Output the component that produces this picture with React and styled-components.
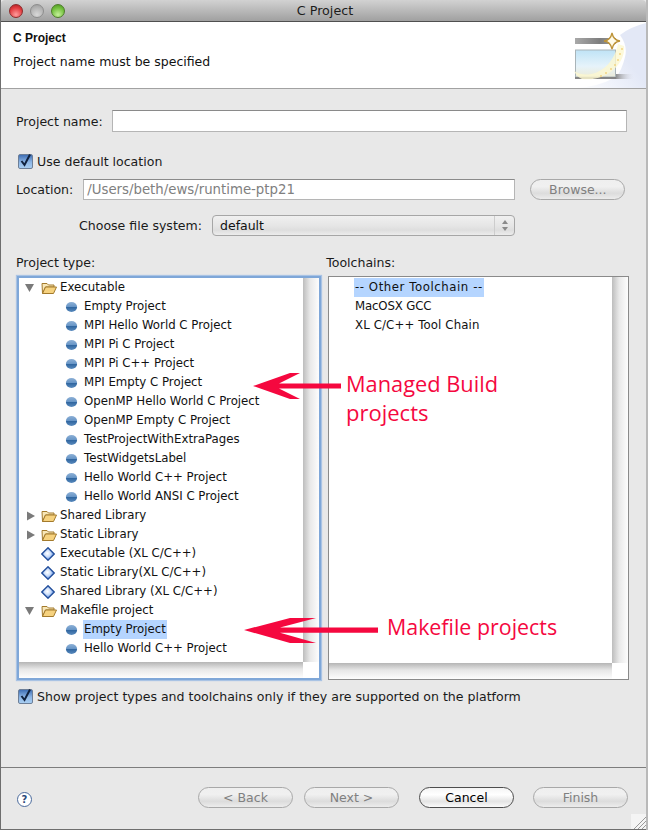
import React from "react";
import styled, { createGlobalStyle } from "styled-components";

const GlobalStyles = createGlobalStyle`
  html, body { margin: 0; padding: 0; background: #b9b9b9; }
  * { box-sizing: border-box; }
  body { font-family: "DejaVu Sans", "Liberation Sans", sans-serif; font-size: 12px; color: #111; }
`;

const PROJECT_TYPES = [
  { label: "Executable", kind: "open" },
  { label: "Empty Project", kind: "leaf" },
  { label: "MPI Hello World C Project", kind: "leaf" },
  { label: "MPI Pi C Project", kind: "leaf" },
  { label: "MPI Pi C++ Project", kind: "leaf" },
  { label: "MPI Empty C Project", kind: "leaf" },
  { label: "OpenMP Hello World C Project", kind: "leaf" },
  { label: "OpenMP Empty C Project", kind: "leaf" },
  { label: "TestProjectWithExtraPages", kind: "leaf" },
  { label: "TestWidgetsLabel", kind: "leaf" },
  { label: "Hello World C++ Project", kind: "leaf" },
  { label: "Hello World ANSI C Project", kind: "leaf" },
  { label: "Shared Library", kind: "closed" },
  { label: "Static Library", kind: "closed" },
  { label: "Executable (XL C/C++)", kind: "diamond" },
  { label: "Static Library(XL C/C++)", kind: "diamond" },
  { label: "Shared Library (XL C/C++)", kind: "diamond" },
  { label: "Makefile project", kind: "open" },
  { label: "Empty Project", kind: "leaf", selected: true },
  { label: "Hello World C++ Project", kind: "leaf" },
];

const TOOLCHAINS = [
  { label: "-- Other Toolchain --", selected: true, tracking: 0.55 },
  { label: "MacOSX GCC", tracking: -0.15 },
  { label: "XL C/C++ Tool Chain", tracking: 0.12 },
];

const SPARKLES = [
  [46, 32], [44, 38], [41, 43], [37, 47], [32, 51], [27, 54], [48, 27],
];

const Window = styled.div`
  position: relative;
  width: 646px;
  height: 830px;
  display: flex;
  flex-direction: column;
  background: #e8e8e8;
  border-left: 1px solid #6e6e6e;
  border-bottom: 1px solid #6e6e6e;
  overflow: hidden;
`;

const TitleBar = styled.div`
  height: 22px;
  flex: none;
  position: relative;
  display: flex;
  align-items: center;
  justify-content: center;
  padding-left: 3px;
  font-size: 12.7px;
  color: #1c1c1c;
  background: linear-gradient(#d2d2d2, #a0a0a0);
  border-bottom: 1px solid #4f4f4f;
  border-radius: 4px 4px 0 0;
`;

const Lights = styled.div`
  position: absolute;
  left: 8px;
  top: 4px;
  display: flex;
  gap: 7px;
`;

const Light = styled.span`
  width: 14px;
  height: 14px;
  border-radius: 50%;
  border: 1px solid ${(p) => p.$edge};
  background: radial-gradient(circle at 50% 80%, ${(p) => p.$glow}, ${(p) => p.$color} 60%, ${(p) => p.$top});
`;

const Header = styled.div`
  height: 67px;
  flex: none;
  display: flex;
  justify-content: space-between;
  background: #fff;
  border-bottom: 1px solid #a2a2a2;
`;

const HeaderText = styled.div`
  padding: 9px 0 0 12px;
`;

const HeaderTitle = styled.div`
  font-family: "Liberation Sans", sans-serif;
  font-weight: bold;
  font-size: 12px;
  line-height: 15px;
`;

const HeaderMessage = styled.div`
  margin: 8px 0 0 0;
  font-size: 12.5px;
  line-height: 15px;
`;

const Body = styled.div`
  flex: 1;
  display: flex;
  flex-direction: column;
  padding: 21px 0 0 15px;
`;

const Row = styled.div`
  display: flex;
  align-items: center;
  height: ${(p) => p.$height}px;
  margin-top: ${(p) => p.$top || 0}px;
`;

const Label = styled.span`
  font-size: 12.55px;
  color: #1a1a1a;
  margin-left: ${(p) => p.$left || 0}px;
  white-space: nowrap;
`;

const TextInput = styled.input`
  height: 100%;
  border: 1px solid #b5b5b5;
  border-top-color: #8a8a8a;
  background: #fff;
  padding: 0 3px;
  font: 13.3px "DejaVu Sans", sans-serif;
  color: #808080;
  width: ${(p) => p.$width}px;
  margin-left: ${(p) => p.$left}px;
  outline: none;
`;

const CheckBox = styled.span`
  width: 15px;
  height: 15px;
  flex: none;
  margin: 0 4px 0 2px;
  border-radius: 2px;
  border: 1px solid #6d7f98;
  background: linear-gradient(#3f6fb5, #8db6e6 55%, #a7cdf1);
  display: flex;
  align-items: center;
  justify-content: center;
`;

const PillButton = styled.button`
  width: 95px;
  height: 21px;
  padding: 0;
  border-radius: 11px;
  border: 1px solid ${(p) => (p.$active ? "#4d4d4d" : "#a8a8a8")};
  background: ${(p) =>
    p.$active
      ? "linear-gradient(#f4f4f4, #ffffff 35%, #e4e4e4 70%, #fafafa)"
      : "linear-gradient(#efefef, #f0f0f0 35%, #dcdcdc 70%, #ececec)"};
  color: ${(p) => (p.$active ? "#000" : "#808080")};
  font: 12.5px "DejaVu Sans", sans-serif;
  margin-left: ${(p) => p.$left || 0}px;
`;

const SelectBox = styled.div`
  width: 303px;
  height: 21px;
  margin-left: 10px;
  display: flex;
  align-items: center;
  justify-content: space-between;
  padding-left: 7px;
  font-size: 12.5px;
  border: 1px solid #a6a6a6;
  border-radius: 4px;
  background: linear-gradient(#f0f0f0, #e6e6e6 50%, #dedede 75%, #ececec);
`;

const Stepper = styled.span`
  width: 20px;
  height: 100%;
  display: flex;
  align-items: center;
  justify-content: center;
  border-left: 1px solid #cdcdcd;
`;

const Panes = styled.div`
  display: grid;
  grid-template-columns: 304px 301px;
  column-gap: 7px;
  height: 404px;
  margin: 5px 0 0 1px;
`;

const Tree = styled.div`
  position: relative;
  height: 100%;
  background: #fff;
  border: ${(p) => (p.$focused ? "2px solid #7fa7d8" : "1px solid #8a8a8a")};
  box-shadow: ${(p) => (p.$focused ? "0 0 1px 1px #a9c3e4" : "none")};
  overflow: hidden;
`;

const TreeRows = styled.div`
  padding-top: ${(p) => p.$top}px;
`;

const TreeRow = styled.div`
  display: flex;
  align-items: center;
  height: 19px;
  padding-left: ${(p) => (p.$leaf ? 46 : 4)}px;
`;

const RowText = styled.span`
  font-size: 11.75px;
  letter-spacing: ${(p) => p.$tracking || 0}px;
  padding: 0 1px;
  height: 19px;
  line-height: 19px;
  white-space: nowrap;
  background: ${(p) => (p.$selected ? "#b5d5ff" : "transparent")};
`;

const VerticalGutter = styled.div`
  position: absolute;
  top: 0;
  right: 0;
  bottom: 0;
  width: 16px;
  background:
    linear-gradient(#fff, #fff) bottom right / 16px 16px no-repeat,
    linear-gradient(90deg, #bdbdbd, #e9e9e9 45%, #fdfdfd);
`;

const HorizontalGutter = styled.div`
  position: absolute;
  left: 0;
  right: 16px;
  bottom: 0;
  height: 16px;
  background: linear-gradient(#b5b5b5, #e7e7e7 45%, #fdfdfd);
`;

const ToolchainRow = styled.div`
  height: 19px;
  padding-left: 25px;
  display: flex;
`;

const Separator = styled.div`
  height: 1px;
  margin-top: auto;
  margin-left: -15px;
  background: #7d7d7d;
`;

const Footer = styled.div`
  height: 61px;
  flex: none;
  display: flex;
  align-items: flex-start;
  padding: 19px 0 0 1px;
`;

const HelpIcon = styled.span`
  width: 15px;
  height: 15px;
  margin: 5px 0 0 0;
  border-radius: 50%;
  border: 1.5px solid #4a6a9c;
  background: #fff;
  display: flex;
  align-items: center;
  justify-content: center;
  font-size: 10px;
  font-weight: bold;
  color: #2b4a7a;
`;

const Overlay = styled.svg`
  position: absolute;
  left: 0;
  top: 0;
  pointer-events: none;
`;

const Note = styled.div`
  position: absolute;
  left: ${(p) => p.$x}px;
  top: ${(p) => p.$y}px;
  font-family: "Open Sans", "Noto Sans", sans-serif;
  font-size: ${(p) => p.$size}px;
  line-height: 29px;
  color: #f5083f;
  white-space: nowrap;
`;

const Grip = styled.svg`
  position: absolute;
  right: 0;
  bottom: 0;
`;

const Check = () => (
  <svg width="15" height="16" viewBox="0 0 15 16" style={{ overflow: "visible" }}>
    <path d="M3.5 8 L6.5 12 L12 1.5" fill="none" stroke="#10223f" strokeWidth="2" />
  </svg>
);

const Twisty = ({ open }) => (
  <svg width="14" height="12" viewBox="0 0 14 12" style={{ flex: "none" }}>
    {open ? <path d="M2 2 H11 L6.5 10 Z" fill="#7a7a7a" /> : <path d="M4 1.5 L12 6 L4 10.5 Z" fill="#7a7a7a" />}
  </svg>
);

const Folder = () => (
  <svg width="17" height="14" viewBox="0 0 17 14" style={{ flex: "none", margin: "0 1px 0 4px" }}>
    <path d="M1 2.5 H6 L7.5 4 H13 V6 H4.5 L1.5 12.5 Z" fill="#f8e7b8" stroke="#a37a2c" strokeWidth="1" />
    <path d="M1.5 12.5 L4.5 6 H15.5 L12.5 12.5 Z" fill="#f6d27f" stroke="#a37a2c" strokeWidth="1" />
  </svg>
);

const Ball = () => (
  <svg width="13" height="12" viewBox="0 0 13 12" style={{ flex: "none", margin: "0 5px 0 0" }}>
    <defs>
      <linearGradient id="ball" x1="0" y1="0" x2="0" y2="1">
        <stop offset="0" stopColor="#8db0d6" />
        <stop offset="0.48" stopColor="#6795c6" />
        <stop offset="0.52" stopColor="#2f659f" />
        <stop offset="1" stopColor="#5a8bbe" />
      </linearGradient>
    </defs>
    <ellipse cx="6.5" cy="6" rx="5.6" ry="5" fill="url(#ball)" />
  </svg>
);

const Diamond = () => (
  <svg width="14" height="14" viewBox="0 0 14 14" style={{ flex: "none", margin: "0 4px 0 18px" }}>
    <defs>
      <radialGradient id="gem" cx="0.45" cy="0.45" r="0.55">
        <stop offset="0" stopColor="#ffffff" />
        <stop offset="0.45" stopColor="#cfe0fa" />
        <stop offset="1" stopColor="#5f93e8" />
      </radialGradient>
    </defs>
    <path d="M7 0.8 L13.2 7 L7 13.2 L0.8 7 Z" fill="url(#gem)" stroke="#234f9c" strokeWidth="1.4" />
  </svg>
);

const Stepper2 = () => (
  <svg width="8" height="13" viewBox="0 0 8 13">
    <path d="M4 1 L7 5 H1 Z M4 12 L7 8 H1 Z" fill="#8a8a8a" />
  </svg>
);

// wizard banner in the top right of the header
const WizardArt = () => (
  <svg width="72" height="66" viewBox="0 0 72 66" style={{ flex: "none" }}>
    <defs>
      <linearGradient id="wash" x1="0" y1="1" x2="0.7" y2="0.5">
        <stop offset="0" stopColor="#ffffff" />
        <stop offset="0.55" stopColor="#f0f3fb" />
        <stop offset="1" stopColor="#e3e8f6" />
      </linearGradient>
      <linearGradient id="pane" x1="0" y1="0" x2="0" y2="1">
        <stop offset="0" stopColor="#bfe3f6" />
        <stop offset="0.6" stopColor="#e6f3fa" />
        <stop offset="1" stopColor="#ecebd8" />
      </linearGradient>
      <linearGradient id="bar" x1="0" y1="0" x2="1" y2="0">
        <stop offset="0" stopColor="#a9a9a9" />
        <stop offset="0.6" stopColor="#7e7e7e" />
        <stop offset="1" stopColor="#9c9c9c" />
      </linearGradient>
      <linearGradient id="drop" x1="0" y1="0" x2="1" y2="0">
        <stop offset="0" stopColor="#8e8e8e" />
        <stop offset="1" stopColor="#dfe2ee" stopOpacity="0" />
      </linearGradient>
    </defs>
    <path d="M72 1 Q56 5 46 13 Q54 24 51 35 Q48 48 42 55 Q22 66 -1 66 H72 Z" fill="url(#wash)" />
    <rect x="42" y="52" width="18" height="5" fill="url(#drop)" />
    <rect x="1" y="16" width="41" height="6" fill="url(#bar)" />
    <rect x="1" y="22" width="41" height="6" fill="#ffffff" />
    <rect x="1.5" y="28" width="40" height="27" fill="url(#pane)" stroke="#a9b4b8" strokeWidth="1" />
    <rect x="1" y="55" width="41" height="2" fill="#858585" />
    <path d="M0 49 C14 58 38 50 44 22 L50 24 C52 42 32 60 8 57 Q2 54 0 49 Z" fill="#fdf8cf" opacity="0.8" />
    {SPARKLES.map(([x, y]) => (
      <circle key={`${x}-${y}`} cx={x} cy={y} r="1" fill="#f2d585" />
    ))}
    <path d="M30 19 C35 18.5 37 16 38 11 C39 16 42 18.5 46 19 C42 19.5 39 22 38 27 C37 22 35 19.5 30 19 Z" fill="#fffbe9" stroke="#bd9338" strokeWidth="1.3" />
  </svg>
);

const App = () => (
  <>
    <GlobalStyles />
    <Window>
      <TitleBar>
        <Lights>
          <Light $edge="#8c2a2a" $color="#e23b3f" $glow="#ff9c9c" $top="#a81c20" />
          <Light $edge="#8d8d8d" $color="#b4b4b4" $glow="#d8d8d8" $top="#999" />
          <Light $edge="#4d7d2a" $color="#72c03d" $glow="#c5f09a" $top="#4c9020" />
        </Lights>
        C Project
      </TitleBar>
      <Header>
        <HeaderText>
          <HeaderTitle>C Project</HeaderTitle>
          <HeaderMessage>Project name must be specified</HeaderMessage>
        </HeaderText>
        <WizardArt />
      </Header>
      <Body>
        <Row $height={22}>
          <Label>Project name:</Label>
          <TextInput $width={515} $left={9} readOnly />
        </Row>
        <Row $height={18} $top={20}>
          <CheckBox><Check /></CheckBox>
          <Label>Use default location</Label>
        </Row>
        <Row $height={21} $top={9}>
          <Label>Location:</Label>
          <TextInput $width={432} $left={10} defaultValue="/Users/beth/ews/runtime-ptp21" readOnly />
          <PillButton $left={15}>Browse...</PillButton>
        </Row>
        <Row $height={21} $top={15}>
          <Label $left={63}>Choose file system:</Label>
          <SelectBox>
            default
            <Stepper><Stepper2 /></Stepper>
          </SelectBox>
        </Row>
        <Row $height={18} $top={17}>
          <Label>Project type:</Label>
          <Label $left={231}>Toolchains:</Label>
        </Row>
        <Panes>
          <Tree $focused>
            <TreeRows $top={0}>
              {PROJECT_TYPES.map((item, i) => (
                <TreeRow key={i} $leaf={item.kind === "leaf"}>
                  {item.kind === "leaf" && <Ball />}
                  {(item.kind === "open" || item.kind === "closed") && (
                    <>
                      <Twisty open={item.kind === "open"} />
                      <Folder />
                    </>
                  )}
                  {item.kind === "diamond" && <Diamond />}
                  <RowText $selected={item.selected}>{item.label}</RowText>
                </TreeRow>
              ))}
            </TreeRows>
            <VerticalGutter />
            <HorizontalGutter />
          </Tree>
          <Tree>
            <TreeRows $top={1}>
              {TOOLCHAINS.map((item) => (
                <ToolchainRow key={item.label}>
                  <RowText $selected={item.selected} $tracking={item.tracking}>{item.label}</RowText>
                </ToolchainRow>
              ))}
            </TreeRows>
            <VerticalGutter />
            <HorizontalGutter />
          </Tree>
        </Panes>
        <Row $height={18} $top={7}>
          <CheckBox><Check /></CheckBox>
          <Label>Show project types and toolchains only if they are supported on the platform</Label>
        </Row>
        <Separator />
        <Footer>
          <HelpIcon>?</HelpIcon>
          <PillButton $left={166}>&lt; Back</PillButton>
          <PillButton $left={11}>Next &gt;</PillButton>
          <PillButton $left={20} $active>Cancel</PillButton>
          <PillButton $left={19}>Finish</PillButton>
        </Footer>
      </Body>

      <Overlay width="646" height="830" viewBox="1 0 646 830">
        <path d="M253 386 L290 373 H300 L279 383.5 H341 V388.5 H279 L300 399 H290 Z" fill="#f5083f" />
        <path d="M244 630 L290 618 H316 L280 627.5 H378 V632.7 H280 L316 643 H290 Z" fill="#f5083f" />
      </Overlay>
      <Note $x={345} $y={369} $size={21.8}>Managed Build</Note>
      <Note $x={345} $y={398} $size={22}>projects</Note>
      <Note $x={386} $y={612} $size={21.4}>Makefile projects</Note>
      <Grip width="15" height="15" viewBox="0 0 15 15">
        <rect width="15" height="15" fill="#f4f4f4" />
        <path d="M3 15 L15 3 M7 15 L15 7 M11 15 L15 11" stroke="#9a9a9a" strokeWidth="1" />
      </Grip>
    </Window>
  </>
);

export default App;
